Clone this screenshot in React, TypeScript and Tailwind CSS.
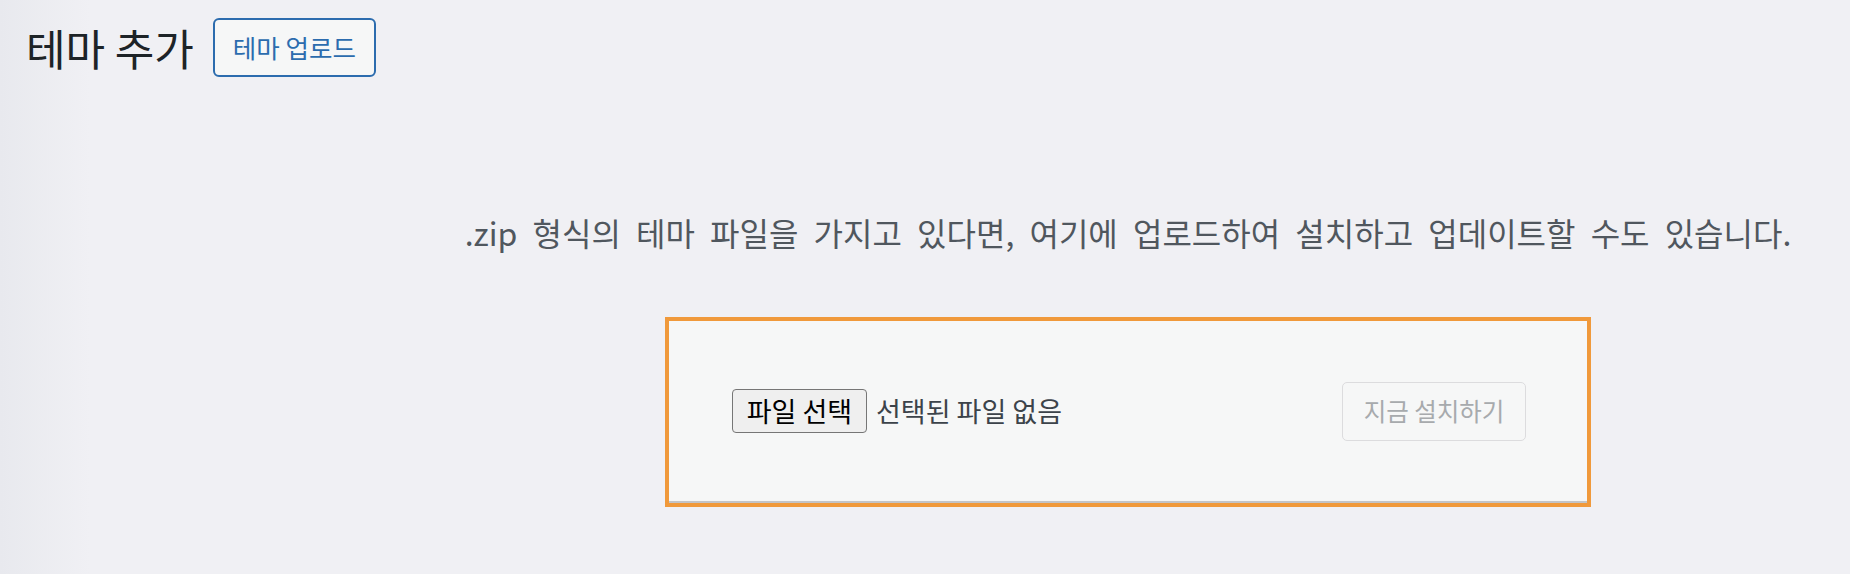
const KR = { fontFamily: '"Noto Sans CJK KR", "Noto Sans", sans-serif' };

export default function App() {
  return (
    <div
      style={KR}
      className="min-h-[574px] w-full bg-[linear-gradient(to_right,#e8e9ee,#f0f0f4_90px)] pl-[26px] pt-[18px]"
    >
      <div className="flex items-center">
        <h1 className="text-[43px] leading-[59px] font-normal text-[#1d2327]">테마 추가</h1>
        <button className="ml-[19px] flex h-[59px] w-[163px] items-center justify-center rounded-[6px] border-2 border-[#2c6cae] bg-[#f6f7f7] text-[25.5px] text-[#2c6cae]">
          테마 업로드
        </button>
      </div>

      <div className="ml-[639px] w-[926px]">
        <div className="mt-[137px] flex justify-center">
          <p className="whitespace-nowrap text-[32px] leading-[36px] text-[#50575e] [word-spacing:8px]">
            .zip 형식의 테마 파일을 가지고 있다면, 여기에 업로드하여 설치하고 업데이트할 수도 있습니다.
          </p>
        </div>

        <div className="mt-[67px] border-4 border-[#f0993b]">
          <div className="flex h-[182px] items-center justify-between border-b-2 border-[#c3c4c7] bg-[#f6f7f7] pl-[63px] pr-[61px]">
            <div className="flex items-center">
              <button className="flex h-[44px] w-[135px] items-center justify-center rounded-[4px] border-[1.5px] border-[#767676] bg-[#efefef] text-[27px] text-black">
                파일 선택
              </button>
              <span className="ml-[9px] text-[27px] text-[#3c434a]">선택된 파일 없음</span>
            </div>
            <button
              disabled
              className="flex h-[59px] w-[184px] items-center justify-center rounded-[5px] border-[1.5px] border-[#dcdcde] bg-[#f6f7f7] text-[24.5px] text-[#a7aaad]"
            >
              지금 설치하기
            </button>
          </div>
        </div>
      </div>
    </div>
  );
}
